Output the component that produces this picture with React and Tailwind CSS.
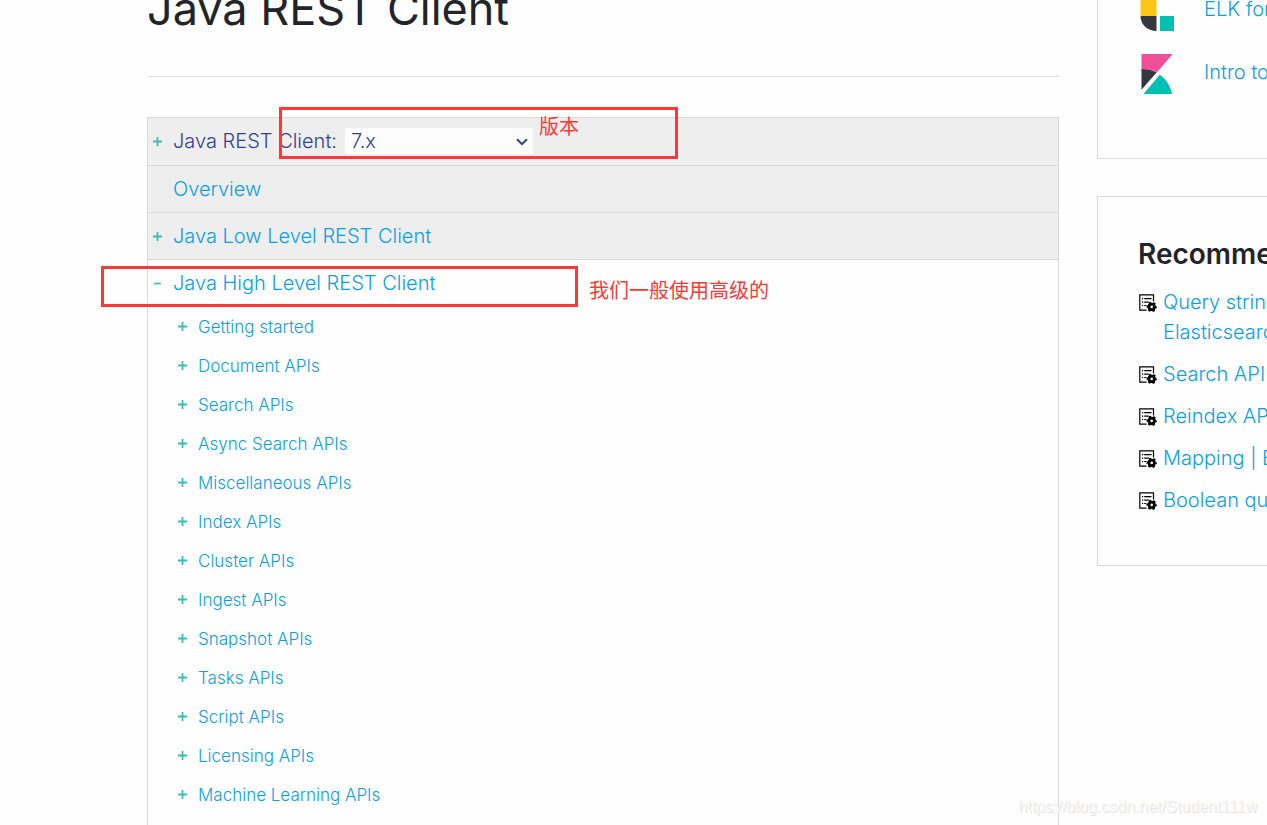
const apis = [
  'Getting started',
  'Document APIs',
  'Search APIs',
  'Async Search APIs',
  'Miscellaneous APIs',
  'Index APIs',
  'Cluster APIs',
  'Ingest APIs',
  'Snapshot APIs',
  'Tasks APIs',
  'Script APIs',
  'Licensing APIs',
  'Machine Learning APIs',
];

const recommended = [
  ['Query string query |', 'Elasticsearch Guide'],
  ['Search API'],
  ['Reindex API'],
  ['Mapping | Elasticsearch'],
  ['Boolean query'],
];

function Toggle({ open, label }) {
  return (
    <button type="button" aria-label={label} className="flex size-[9px] shrink-0 items-center justify-center">
      <svg viewBox="0 0 9 9" className="size-[9px]" fill="none" stroke="#3ebeb0" strokeWidth="1.8">
        {open ? <path d="M1.2 4.5h6.6" /> : <path d="M0 4.5h9M4.5 0v9" />}
      </svg>
    </button>
  );
}

function LogstashLogo() {
  return (
    <svg viewBox="0 0 34 40" className="h-10 w-[34px]" aria-hidden="true">
      <path fill="#fec514" d="M.5 0h2.500c8 0 13.500 5 13.500 12v13H.5z" />
      <path fill="#343741" d="M.5 25h16v15C7.500 40 .5 33.500 .5 25z" />
      <path fill="#00bfb3" d="M20 25h14v15H20z" />
    </svg>
  );
}

function KibanaLogo() {
  return (
    <svg viewBox="0 0 34 40" className="h-10 w-[34px]" aria-hidden="true">
      <path fill="#f04e98" d="M1.500 0H32.700L17 18.200C13 16 7 15 1.500 15z" />
      <path fill="#343741" d="M1.500 15c6 0 11 1.200 15.300 3.300L1.500 35.700z" />
      <path fill="#00bfb3" d="M19.800 20.800C26 25.300 30.500 32 32 40H3.500z" />
    </svg>
  );
}

function DocIcon() {
  return (
    <svg viewBox="0 0 18 18" className="mt-[7px] size-[18px] shrink-0" aria-hidden="true">
      <g fill="none" stroke="#000" strokeWidth="1.200">
        <path d="M14.500 7.500V.8H.8v15.400h6.700" />
        <path d="M3 4.700h1.200M5.200 4.700h7.300M3 8.200h1.200M5.200 8.200h4.600M3 11.500h1.200M5.200 11.500h2" />
      </g>
      <circle cx="12.700" cy="12.900" r="2.700" fill="none" stroke="#000" strokeWidth="2.800" />
      <circle cx="12.700" cy="12.900" r="4.300" fill="none" stroke="#000" strokeWidth="1.800" strokeDasharray="2.250 2.250" strokeDashoffset="1.100" />
    </svg>
  );
}

export default function App() {
  return (
    <div className="flex min-h-screen gap-[38px] overflow-hidden bg-[#fefefe] pl-[147px] font-['Inter','Noto_Sans_CJK_SC',sans-serif] font-[350] text-[#0a9fe6]">
      <main className="relative flex min-w-0 flex-1 flex-col">
        <h1 className="-mt-[20px] text-[45px] leading-[58px] font-normal text-[#212529]">Java REST Client</h1>
        <hr className="mt-[38px] border-[#e3e3e3]" />
        <ul className="mt-[40px] flex flex-1 flex-col border-x border-t border-[#dadada] text-[20px] leading-[30px]">
          <li className="flex h-12 items-center border-b border-[#dadada] bg-[#eee] pb-px pl-[5px] text-[#343f91]">
            <Toggle label="Expand Java REST Client" />
            <label htmlFor="version" className="ml-[11px]">Java REST Client:</label>
            <span className="relative ml-2 flex">
              <select id="version" defaultValue="7.x" className="h-[26px] w-[188px] appearance-none bg-[#fcfcfc] pl-[6px] leading-[26px]">
                <option>7.x</option>
              </select>
              <svg viewBox="0 0 12 8" className="pointer-events-none absolute top-[10px] right-[5px] h-2 w-3" fill="none" stroke="#343f91" strokeWidth="2">
                <path d="M1 1.200 6 6.200l5-5" />
              </svg>
            </span>
          </li>
          <li className="flex h-[47px] items-center border-b border-[#dadada] bg-[#eee] pl-[25px]">
            <a href="#overview">Overview</a>
          </li>
          <li className="flex h-[47px] items-center border-b border-[#dadada] bg-[#eee] pl-[5px]">
            <Toggle label="Expand Java Low Level REST Client" />
            <a href="#low-level" className="ml-[11px]">Java Low Level REST Client</a>
          </li>
          <li>
            <div className="flex h-[47px] items-center pb-px pl-[5px]">
              <Toggle open label="Collapse Java High Level REST Client" />
              <a href="#high-level" className="ml-[11px]">Java High Level REST Client</a>
            </div>
            <ul className="pl-[30px] text-[17px] leading-[26px]">
              {apis.map((name) => (
                <li key={name} className="flex h-[39px] items-center">
                  <Toggle label={`Expand ${name}`} />
                  <a href="#apis" className="ml-[11px]">{name}</a>
                </li>
              ))}
            </ul>
          </li>
        </ul>

        <div className="pointer-events-none absolute top-[107px] left-[132px] h-[52px] w-[399px] border-3 border-[#ff3737]" />
        <p className="absolute top-[112px] left-[392px] text-[20px] leading-[30px] font-normal text-[#ff3737]">版本</p>
        <div className="pointer-events-none absolute top-[266px] -left-[46px] h-[41px] w-[477px] border-3 border-[#ff3737]" />
        <p className="absolute top-[276px] left-[442px] text-[20px] leading-[30px] font-normal whitespace-nowrap text-[#ff3737]">我们一般使用高级的</p>
      </main>

      <aside className="w-[170px] shrink-0 overflow-hidden text-[20px] leading-[30px] whitespace-nowrap">
        <div className="-mt-[22px] w-[360px] border border-[#d3dae6] pb-[53px] pl-[42px]">
          <a href="#elk" className="flex h-[63px] items-center gap-[30px]">
            <LogstashLogo />
            <span className="pb-1">ELK for Logs &amp; Metrics</span>
          </a>
          <a href="#kibana" className="flex h-[63px] items-center gap-[30px]">
            <KibanaLogo />
            <span className="pb-1">Intro to Kibana</span>
          </a>
        </div>
        <section className="mt-[37px] w-[360px] border border-[#d3dae6] pt-[39px] pb-[50px] pl-[40px]">
          <h2 className="text-[28px] leading-9 font-semibold text-[#212529]">Recommended</h2>
          <ul className="mt-[15px] flex flex-col gap-3 pl-px">
            {recommended.map((lines) => (
              <li key={lines[0]} className="flex gap-[6px]">
                <DocIcon />
                <a href="#guide" className="flex flex-col">
                  {lines.map((line) => (
                    <span key={line}>{line}</span>
                  ))}
                </a>
              </li>
            ))}
          </ul>
        </section>
      </aside>

      <p className="pointer-events-none absolute right-[10px] bottom-[6px] font-['Liberation_Sans',sans-serif] text-[16px] leading-6 font-normal text-[#f8f8f8] [text-shadow:1px_1px_1px_#dedede]">
        https://blog.csdn.net/Student111w
      </p>
    </div>
  );
}
